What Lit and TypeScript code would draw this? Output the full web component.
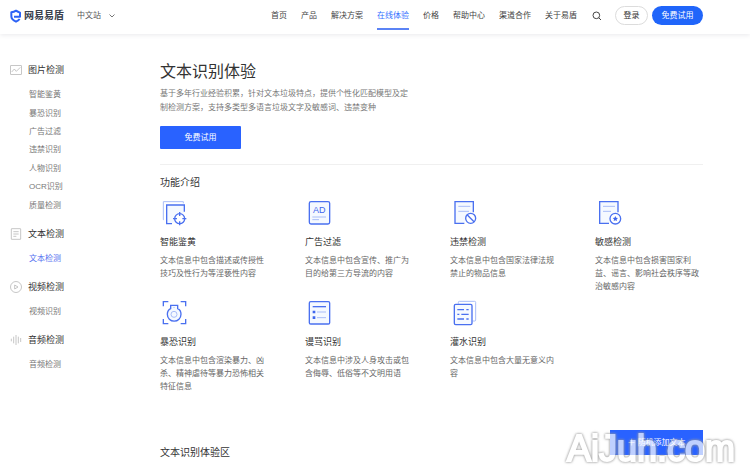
import { LitElement, html, css, svg, TemplateResult } from "lit";
import { customElement } from "lit/decorators.js";
import { classMap } from "lit/directives/class-map.js";

interface MenuGroup {
  title: string;
  icon: TemplateResult;
  items: string[];
  active?: string;
}

interface Feature {
  title: string;
  text: string;
  icon: TemplateResult;
}

const NAV = ["首页", "产品", "解决方案", "在线体验", "价格", "帮助中心", "渠道合作", "关于易盾"];

const MENU: MenuGroup[] = [
  {
    title: "图片检测",
    icon: svg`<rect x="1.5" y="4.5" width="33" height="27" rx="1"/><path d="M5 24 13 15l6 7 12-12"/>`,
    items: ["智能鉴黄", "暴恐识别", "广告过滤", "违禁识别", "人物识别", "OCR识别", "质量检测"],
  },
  {
    title: "文本检测",
    icon: svg`<rect x="4" y="2" width="28" height="32" rx="1"/><path d="M10 11h16M10 18h16M10 25h9"/>`,
    items: ["文本检测"],
    active: "文本检测",
  },
  {
    title: "视频检测",
    icon: svg`<circle cx="18" cy="18" r="16.5"/><path d="M14 12v12l10-6z"/>`,
    items: ["视频识别"],
  },
  {
    title: "音频检测",
    icon: svg`<path d="M4 14v8M11 8v20M18 3v30M25 8v20M32 12v12"/>`,
    items: ["音频检测"],
  },
];

const FEATURES: Feature[] = [
  {
    title: "智能鉴黄",
    text: "文本信息中包含描述或传授性技巧及性行为等淫亵性内容",
    icon: svg`<path class="light" d="M12 59H10V5h60v5"/><path class="tint" d="M36 71H20V15h53v20"/>
      <circle class="paper" cx="59" cy="56" r="15"/><path d="M59 36v12M59 64v12M39 56h12M67 56h12"/>`,
  },
  {
    title: "广告过滤",
    text: "文本信息中包含宣传、推广为目的给第三方导流的内容",
    icon: svg`<rect class="tint" x="13" y="5" width="61" height="67" rx="5"/>
      <text x="43" y="39" text-anchor="middle">AD</text><path class="light" d="M22 51h41M22 59h20"/>`,
  },
  {
    title: "违禁检测",
    text: "文本信息中包含国家法律法规禁止的物品信息",
    icon: svg`<path class="tint" d="M43 70H15V5h55v32"/><path class="light" d="M25 19h36M25 34h32"/>
      <circle class="paper" cx="62" cy="55" r="15"/><path d="m52 45 20 20"/>`,
  },
  {
    title: "敏感检测",
    text: "文本信息中包含损害国家利益、谣言、影响社会秩序等政治敏感内容",
    icon: svg`<path class="tint" d="M42 70H14V5h55v32"/><path class="light" d="M24 19h36M24 34h24"/>
      <circle class="paper" cx="61" cy="56" r="16"/>
      <path class="solid" d="m61 48 2.400 5.100 5.600.7-4.100 3.900 1 5.500-4.900-2.700-4.900 2.700 1-5.500-4.100-3.900 5.600-.7z"/>`,
  },
  {
    title: "暴恐识别",
    text: "文本信息中包含渲染暴力、凶杀、精神虐待等暴力恐怖相关特征信息",
    icon: svg`<path d="M10 19V5h15M62 5h15v14M77 57v14H62M25 71H10V57"/>
      <path class="tint" d="M32 16h21v10c7 3 10 9 10 17a20 20 0 0 1-41 0c0-8 4-14 10-17z"/>
      <circle class="light" cx="42" cy="43" r="9"/><path class="light" d="M42 21v3"/>`,
  },
  {
    title: "谩骂识别",
    text: "文本信息中涉及人身攻击或包含侮辱、低俗等不文明用语",
    icon: svg`<rect class="tint" x="13" y="5" width="61" height="67" rx="4"/><path d="M23 20h40"/>
      <path class="solid" d="M23 32h8v8h-8zM23 49h8v8h-8z"/><path class="light" d="M36 36h27M36 53h27"/>`,
  },
  {
    title: "灌水识别",
    text: "文本信息中包含大量无意义内容",
    icon: svg`<path class="light" d="M25 11V7q0-3 3-3h46q3 0 3 3v53q0 3-3 3h-6"/>
      <rect class="tint" x="13" y="13" width="53" height="61" rx="4"/>
      <path d="M22 29h20M49 29h7M22 43h6M34 43h22M22 57h20M49 57h7"/>`,
  },
];

@customElement("app-root")
export class AppRoot extends LitElement {
  static styles = css`
    :host {
      display: block;
      position: relative;
      min-height: 100vh;
      overflow: hidden;
      background: #fff;
      color: #333;
      font: 8px/14px "Liberation Sans", "Noto Sans CJK SC", sans-serif;
    }
    * { box-sizing: border-box; }
    a { color: inherit; text-decoration: none; }
    button { font: inherit; cursor: pointer; padding: 0; border: 0; white-space: nowrap; }
    h1, h2, h3, p, ul { margin: 0; padding: 0; font-weight: 400; }
    ul { list-style: none; }
    svg { display: block; fill: none; flex: none; }

    header {
      display: flex;
      align-items: center;
      height: 34px;
      padding: 0 47px 3px 10px;
      box-shadow: 0 1px 5px #e9e9ec;
      color: #444;
    }
    .brand { display: flex; align-items: center; gap: 2px; font-size: 10px; font-weight: 700; color: #3a404c; }
    .logo { width: 12px; height: 14px; }
    .site { display: flex; align-items: center; gap: 8px; margin-left: 13px; background: none; color: #555; }
    .chevron { width: 6px; height: 6px; stroke: #777; }
    nav { display: flex; gap: 14px; margin-left: auto; }
    nav a { padding: 6px 0 4px; border-bottom: 2px solid transparent; line-height: 16px; }
    nav a.active { color: #3370ff; border-color: #5b83f5; }
    .search { margin: 0 13px 0 15px; background: none; }
    .search svg { width: 10px; height: 10px; stroke: #444; }
    .pill { height: 19px; border-radius: 10px; }
    .login { width: 33px; border: 1px solid #dcdcdc; background: #fff; color: #333; }
    .trial { width: 51px; margin-left: 4px; background: #2065fa; color: #fff; }

    .page { display: flex; padding: 26px 47px 0 10px; }
    aside { flex: none; width: 150px; padding-top: 3px; }
    .group { margin-bottom: 12px; }
    .group h2 { display: flex; align-items: center; gap: 6px; font-size: 9px; line-height: 14px; }
    .group h2 svg { width: 12px; height: 12px; stroke: #aaa; stroke-width: 2; }
    .group ul { display: grid; padding: 9px 0 0 19px; line-height: 18px; color: #777; }
    .group ul.long { min-height: 138px; }
    .group li { display: flex; align-items: center; }
    .group .active { color: #5470f0; }

    main { flex: 1; min-width: 0; }
    h1 { font-size: 16px; line-height: 24px; }
    .intro { max-width: 252px; margin-top: 3px; color: #777; }
    .try { display: block; width: 81px; height: 23px; margin-top: 11px; border-radius: 1px; background: #2962ff; color: #fff; }
    .features { margin-top: 15px; padding-top: 10px; border-top: 1px solid #f0f0f0; }
    .heading { font-size: 10px; line-height: 15px; }
    .cards { display: grid; grid-template-columns: repeat(4, 1fr); column-gap: 37px; row-gap: 7px; margin-top: 10px; }
    .card { min-height: 93px; color: #666; line-height: 13px; }
    .card svg { width: 28px; height: 28px; stroke: #4a70f0; stroke-width: 4; }
    .card h3 { margin: 7px 0 5px; font-size: 9px; line-height: 14px; color: #333; }
    .card .light { stroke: #a9bdf8; stroke-width: 3; }
    .tint { fill: #f5f9ff; }
    .paper { fill: #fff; }
    .card .solid { fill: #3f66ee; stroke: none; }
    .card text { font: 27px "Liberation Sans", sans-serif; fill: #3f66ee; stroke: none; }
    .demo { display: flex; justify-content: space-between; margin: 37px 0 17px; }
    .demo .heading { padding-top: 15px; }
    .add { width: 93px; height: 25px; background: #2962ff; color: #fff; }
    .watermark {
      position: absolute;
      right: 15px;
      bottom: 8px;
      font: 36px/40px "Liberation Sans", sans-serif;
      color: #fff;
      -webkit-text-stroke: 2px #fff;
      filter: drop-shadow(0 0 1px #888) drop-shadow(0 0 1px #aaa);
      opacity: 0.7;
      pointer-events: none;
    }
  `;

  private renderGroup(group: MenuGroup) {
    return html`<section class="group">
      <h2><svg viewBox="0 0 36 36" aria-hidden="true">${group.icon}</svg>${group.title}</h2>
      <ul class=${classMap({ long: group.items.length > 1 })}>
        ${group.items.map(
          (item) => html`<li><a href="#" class=${classMap({ active: item === group.active })}>${item}</a></li>`
        )}
      </ul>
    </section>`;
  }

  private renderFeature(feature: Feature) {
    return html`<article class="card">
      <svg viewBox="0 0 84 84" aria-hidden="true">${feature.icon}</svg>
      <h3>${feature.title}</h3>
      <p>${feature.text}</p>
    </article>`;
  }

  render() {
    return html`
      <header>
        <a class="brand" href="#">
          <svg class="logo" viewBox="0 0 36 42" aria-hidden="true">
            <path
              d="M12 23h18V11Q24 9 18 5 12 9 4 10v12q0 10 14 16 7-3 11-8"
              stroke="#2c62f5" stroke-width="6" stroke-linejoin="round"
            />
          </svg>网易易盾</a>
        <button class="site">中文站<svg class="chevron" viewBox="0 0 12 12" stroke-width="2" aria-hidden="true"><path d="m1 3 5 5 5-5" /></svg></button>
        <nav>
          ${NAV.map((item) => html`<a href="#" class=${classMap({ active: item === "在线体验" })}>${item}</a>`)}
        </nav>
        <button class="search" aria-label="搜索">
          <svg viewBox="0 0 30 30" stroke-width="3" aria-hidden="true"><circle cx="13" cy="13" r="10" /><path d="m20 20 7 7" /></svg>
        </button>
        <button class="pill login">登录</button>
        <button class="pill trial">免费试用</button>
      </header>
      <div class="page">
        <aside>${MENU.map((group) => this.renderGroup(group))}</aside>
        <main>
          <h1>文本识别体验</h1>
          <p class="intro">基于多年行业经验积累，针对文本垃圾特点，提供个性化匹配模型及定制检测方案，支持多类型多语言垃圾文字及敏感词、违禁变种</p>
          <button class="try">免费试用</button>
          <section class="features">
            <h2 class="heading">功能介绍</h2>
            <div class="cards">${FEATURES.map((feature) => this.renderFeature(feature))}</div>
          </section>
          <section class="demo">
            <h2 class="heading">文本识别体验区</h2>
            <button class="add">＋ 随机添加文本</button>
          </section>
        </main>
      </div>
      <div class="watermark">AiJuh.com</div>
    `;
  }
}
